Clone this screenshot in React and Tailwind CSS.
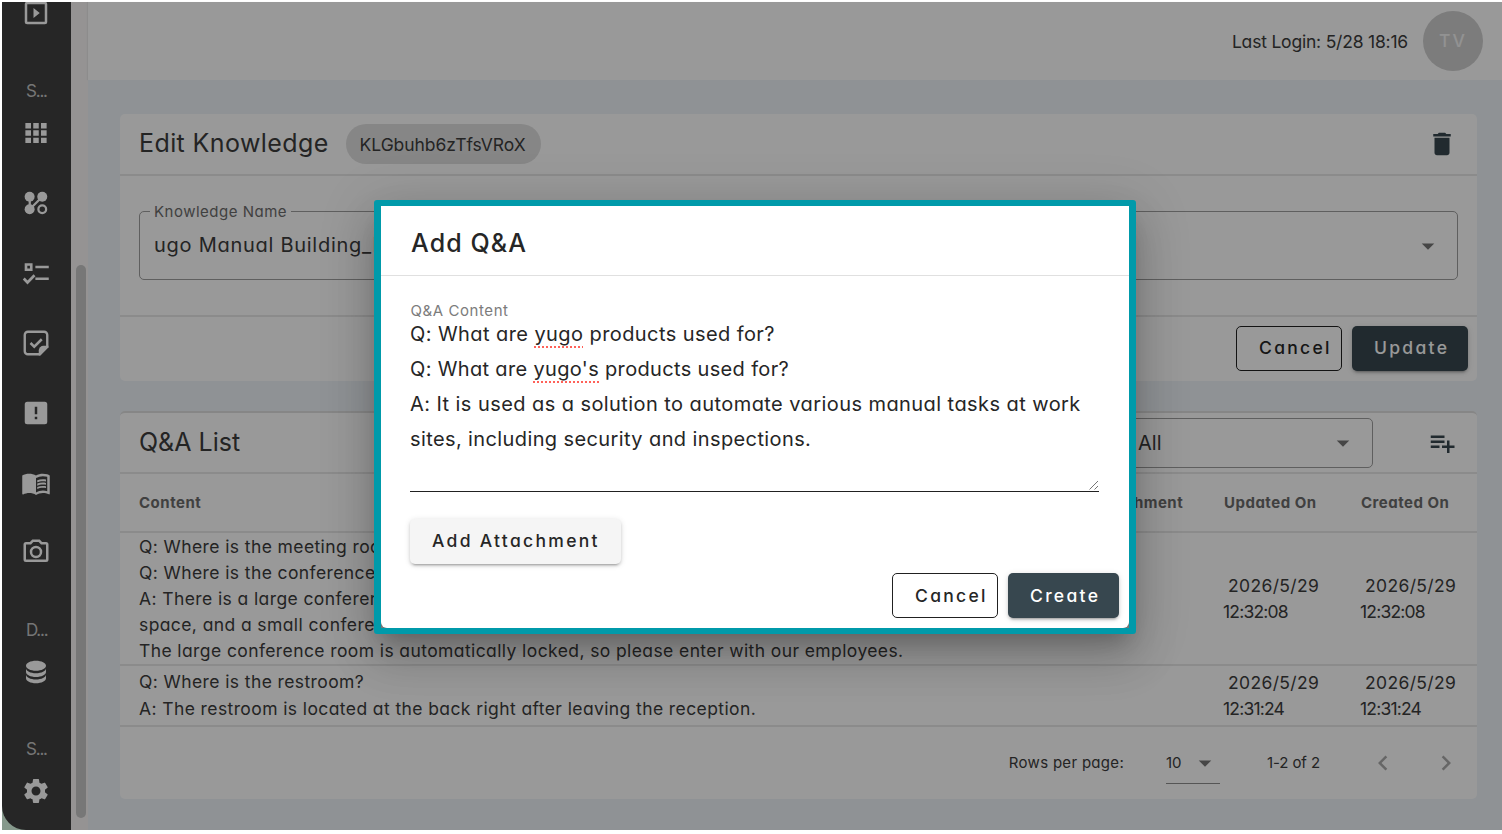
import {
  MdArrowDropDown,
  MdChevronLeft,
  MdChevronRight,
  MdDelete,
  MdMenuBook,
  MdPlaylistAdd,
  MdSettings,
} from 'react-icons/md'

function Svg({ children }) {
  return (
    <svg viewBox="0 0 24 24" className="h-[30px] w-[30px]" fill="currentColor">
      {children}
    </svg>
  )
}

const PlayBoxIcon = () => (
  <Svg>
    <path d="M19,19H5V5H19M19,3H5A2,2 0 0,0 3,5V19A2,2 0 0,0 5,21H19A2,2 0 0,0 21,19V5A2,2 0 0,0 19,3M10,8V16L15,12" />
  </Svg>
)

const AppsIcon = () => (
  <Svg>
    <path d="M16,20H20.500V15.700H16M16,14.200H20.500V9.800H16M9.800,8.300H14.200V4H9.800M16,8.300H20.500V4H16M9.800,14.200H14.200V9.800H9.800M3.500,14.200H8V9.800H3.500M3.500,20H8V15.700H3.500M9.800,20H14.200V15.700H9.800M3.500,8.300H8V4H3.500V8.300Z" />
  </Svg>
)

const FlowIcon = () => (
  <Svg>
    <circle cx="6.900" cy="7" r="4" />
    <circle cx="17" cy="7" r="4" />
    <circle cx="6.900" cy="17" r="4" />
    <circle cx="17" cy="17" r="3.1" fill="none" stroke="currentColor" strokeWidth="1.8" />
    <path d="M7 7V17L17 7" fill="none" stroke="currentColor" strokeWidth="1.8" />
  </Svg>
)

const ChecklistIcon = () => (
  <Svg>
    <path
      d="M4 5.200h4.200v4.200H4zM11.500 7.200h10.700M11.500 16.600h10.700M2.200 16.400l3 3.200 5.600-5.800"
      fill="none"
      stroke="currentColor"
      strokeWidth="2.1"
    />
  </Svg>
)

const StickerCheckIcon = () => (
  <Svg>
    <path
      d="M5.500 3h13A2.500 2.500 0 0 1 21 5.500V15l-6 6H5.500A2.500 2.500 0 0 1 3 18.500V5.500A2.500 2.500 0 0 1 5.500 3z"
      fill="none"
      stroke="currentColor"
      strokeWidth="1.9"
    />
    <path d="M21.900 14.200h-3.900A3.800 3.800 0 0 0 14.200 18v3.900h1.200l6.500-6.500z" />
    <path d="M7.600 12l3 3L16.600 9" fill="none" stroke="currentColor" strokeWidth="2" />
  </Svg>
)

const AlertBoxIcon = () => (
  <Svg>
    <path d="M5,3H19A2,2 0 0,1 21,5V19A2,2 0 0,1 19,21H5A2,2 0 0,1 3,19V5A2,2 0 0,1 5,3M13,13V7H11V13H13M13,17V15H11V17H13Z" />
  </Svg>
)

const CameraIcon = () => (
  <Svg>
    <path d="M20,4H16.83L15,2H9L7.17,4H4A2,2 0 0,0 2,6V18A2,2 0 0,0 4,20H20A2,2 0 0,0 22,18V6A2,2 0 0,0 20,4M20,18H4V6H8.05L9.88,4H14.12L15.95,6H20V18M12,7A5,5 0 0,0 7,12A5,5 0 0,0 12,17A5,5 0 0,0 17,12A5,5 0 0,0 12,7M12,15A3,3 0 0,1 9,12A3,3 0 0,1 12,9A3,3 0 0,1 15,12A3,3 0 0,1 12,15Z" />
  </Svg>
)

const DatabaseIcon = () => (
  <Svg>
    <path d="M12,3C7.58,3 4,4.79 4,7C4,9.21 7.58,11 12,11C16.42,11 20,9.21 20,7C20,4.79 16.42,3 12,3M4,9V12C4,14.21 7.58,16 12,16C16.42,16 20,14.21 20,12V9C20,11.21 16.42,13 12,13C7.58,13 4,11.21 4,9M4,14V17C4,19.21 7.58,21 12,21C16.42,21 20,19.21 20,17V14C20,16.21 16.42,18 12,18C7.58,18 4,16.21 4,14Z" />
  </Svg>
)

function NavItem({ children, className = '' }) {
  return (
    <div className={`flex h-[70px] shrink-0 items-center justify-center pr-px ${className}`}>{children}</div>
  )
}

function NavLabel({ children, className = '' }) {
  return (
    <div className={`h-5 shrink-0 pl-6 text-[17px] leading-5 tracking-[-1.2px] text-[#c4c4c4] ${className}`}>
      {children}
    </div>
  )
}

function Sidebar() {
  return (
    <aside className="w-[69px] shrink-0 bg-[#dfffea]">
      <nav className="flex h-full flex-col overflow-hidden rounded-bl-[24px] bg-[#404040] text-white">
        <NavItem className="-mt-6"><PlayBoxIcon /></NavItem>
        <NavLabel className="mt-[33px]">S...</NavLabel>
        <NavItem className="-mt-[3px]"><AppsIcon /></NavItem>
        <NavItem><FlowIcon /></NavItem>
        <NavItem><ChecklistIcon /></NavItem>
        <NavItem><StickerCheckIcon /></NavItem>
        <NavItem><AlertBoxIcon /></NavItem>
        <NavItem><MdMenuBook className="h-[30px] w-[30px]" /></NavItem>
        <NavItem className="pb-[2px]"><CameraIcon /></NavItem>
        <NavLabel className="mt-8">D...</NavLabel>
        <NavItem className="-mt-[3px]"><DatabaseIcon /></NavItem>
        <NavLabel className="mt-8">S...</NavLabel>
        <NavItem className="-mt-[3px]"><MdSettings className="h-[30px] w-[30px]" /></NavItem>
      </nav>
    </aside>
  )
}

function Button({ children, className = '' }) {
  return (
    <button
      className={`h-[45px] rounded-[5px] pt-px pl-[22px] text-left text-[17.5px] font-medium tracking-[2.3px] ${className}`}
    >
      {children}
    </button>
  )
}

const OUTLINED = 'w-[106px] border-[1.5px] border-[#212121] bg-transparent text-[#262626]'
const FILLED =
  'bg-[#37474f] text-white shadow-[0_4px_2px_-3px_rgba(0,0,0,0.2),0_2px_3px_rgba(0,0,0,0.14),0_1px_6px_rgba(0,0,0,0.12)]'

function EditCard() {
  return (
    <section className="h-[267px] rounded-[5px] bg-white">
      <div className="flex h-[62px] items-center border-b-2 border-[#e8e8e8] pr-5 pl-[19px]">
        <h1 className="pb-px text-[25px] tracking-[0.4px]">Edit Knowledge</h1>
        <span className="ml-[17px] flex h-10 w-[195px] items-center rounded-full bg-[#e0e0e0] pt-[2px] pl-[14px] text-[17.5px] tracking-[-0.07px]">
          KLGbuhb6zTfsVRoX
        </span>
        <MdDelete className="ml-auto h-[30px] w-[30px] text-[#37474f]" />
      </div>
      <div className="h-[139px] px-[19px] pt-[27px]">
        <fieldset className="h-[77px] rounded-[5px] border-[1.5px] border-[#9e9e9e] pl-[14px]">
          <legend className="-ml-[4px] h-[17px] px-[4px] text-[15px] leading-[17px] tracking-[0.5px] text-[#6c6c6c]">
            Knowledge Name
          </legend>
          <div className="flex h-[52px] items-center pr-[14px] text-[20px] tracking-[0.73px]">
            <span className="pb-[2px]">ugo Manual Building_B</span>
            <MdArrowDropDown className="ml-auto h-[30px] w-[30px] text-[#757575]" />
          </div>
        </fieldset>
      </div>
      <div className="flex h-[66px] items-center justify-end gap-[10px] border-t-2 border-[#e8e8e8] pr-[9px] pb-[2px]">
        <Button className={OUTLINED}>Cancel</Button>
        <Button className={`w-[116px] ${FILLED}`}>Update</Button>
      </div>
    </section>
  )
}

const rows = [
  {
    height: 'h-[133px] pt-px',
    lines: [
      'Q: Where is the meeting room?',
      'Q: Where is the conference room?',
      'A: There is a large conference room at the back of the shared',
      'space, and a small conference room next to it.',
      'The large conference room is automatically locked, so please enter with our employees.',
    ],
    date: '2026/5/29',
    time: '12:32:08',
  },
  {
    height: 'h-[61px]',
    lines: [
      'Q: Where is the restroom?',
      'A: The restroom is located at the back right after leaving the reception.',
    ],
    date: '2026/5/29',
    time: '12:31:24',
  },
]

function DateCell({ date, time }) {
  return (
    <div className="w-[137px] pl-5 leading-[26px]">
      <div className="pl-[5px] tracking-[0.35px]">{date}</div>
      <div className="tracking-[-0.8px]">{time}</div>
    </div>
  )
}

function ListCard() {
  return (
    <section className="mt-[30px] h-[388px] rounded-[5px] border-t-2 border-[#e0e0e0] bg-white">
      <div className="flex h-[61px] items-center border-b-2 border-[#e8e8e8] pr-5 pl-[19px]">
        <h2 className="pt-px text-[25px]">Q&amp;A List</h2>
        <div className="mr-[54px] ml-auto flex h-[50px] w-[250px] items-center rounded-[5px] border-[1.5px] border-[#9e9e9e] pr-[14px] pl-[14px] text-[20px]">
          <span className="pt-px">All</span>
          <MdArrowDropDown className="ml-auto h-[30px] w-[30px] text-[#757575]" />
        </div>
        <MdPlaylistAdd className="h-[30px] w-[30px] text-[#37474f]" />
      </div>
      <div className="flex h-[59px] items-center border-b-2 border-[#e8e8e8] pt-[2px] pl-5 text-[15px] font-bold tracking-[0.5px] text-[#6c6c6c]">
        <div className="-ml-px flex-1">Content</div>
        <div className="w-[136px] pl-[24px]">Attachment</div>
        <div className="w-[137px] pl-5">Updated On</div>
        <div className="-mr-px w-[137px] pl-5">Created On</div>
      </div>
      {rows.map(r => (
        <div
          key={r.time}
          className={`flex items-center border-b-2 border-[#e8e8e8] pl-[19px] text-[17.5px] leading-[26.2px] ${r.height}`}
        >
          <div className="flex-1 tracking-[0.4px] whitespace-nowrap">
            {r.lines.map(line => <div key={line}>{line}</div>)}
          </div>
          <DateCell date={r.date} time={r.time} />
          <DateCell date={r.date} time={r.time} />
        </div>
      ))}
      <div className="flex h-[72px] items-center justify-end pr-[19px] text-[15px]">
        <span className="pt-px tracking-[0.3px]">Rows per page:</span>
        <div className="ml-[42px] flex h-[42px] w-[54px] items-center border-b-[1.5px] border-[#8e8e8e]">
          <span className="pt-[2px]">10</span>
          <MdArrowDropDown className="ml-auto h-[30px] w-[30px] text-[#757575]" />
        </div>
        <span className="ml-[47px] pt-px tracking-[-0.1px]">1-2 of 2</span>
        <MdChevronLeft className="ml-[48px] h-[30px] w-[30px] text-[#ababab]" />
        <MdChevronRight className="-mr-[3px] ml-[33px] h-[30px] w-[30px] text-[#ababab]" />
      </div>
    </section>
  )
}

function Misspelled({ children }) {
  return (
    <span className="underline decoration-[#ff6259] decoration-dotted decoration-2 underline-offset-[5px] [text-decoration-skip-ink:none]">
      {children}
    </span>
  )
}

function Dialog() {
  return (
    <div className="absolute top-[200px] left-[374px] h-[434px] w-[762px] rounded-[3px] border-x-[7px] border-y-[6px] border-[#009aaa] bg-[#777] text-[#262626] shadow-[0_14px_19px_-9px_rgba(0,0,0,0.2),0_26px_44px_2px_rgba(0,0,0,0.14),0_8px_54px_6px_rgba(0,0,0,0.12)]">
      <div className="flex h-full flex-col rounded-b-[6px] bg-white">
        <div className="flex h-[70px] items-center border-b border-[#e0e0e0] pt-[6px] pl-[30px]">
          <h2 className="text-[25px] font-medium tracking-[1.1px]">Add Q&amp;A</h2>
        </div>
        <div className="pt-[25px] pr-[30px] pl-[29px]">
          <div className="h-[16px] pl-[0.5px] text-[15px] leading-5 tracking-[0.57px] text-[#7c7c7c]">Q&amp;A Content</div>
          <div className="flex h-[175px] border-b-[1.5px] border-[#212121] text-[20px] leading-[35px] whitespace-nowrap">
            <div>
              <div className="tracking-[0.42px]">Q: What are <Misspelled>yugo</Misspelled> products used for?</div>
              <div className="tracking-[0.34px]">Q: What are <Misspelled>yugo's</Misspelled> products used for?</div>
              <div className="tracking-[0.43px]">A: It is used as a solution to automate various manual tasks at work</div>
              <div className="tracking-[0.39px]">sites, including security and inspections.</div>
            </div>
            <svg viewBox="0 0 10 10" className="mb-[1px] ml-auto h-[10px] w-[10px] self-end" stroke="#757575">
              <path d="M0.500 9.500L9 1M5.500 9.500L9 6" />
            </svg>
          </div>
          <Button className="mt-[27px] block w-[211px] bg-[#f5f5f5] pb-px shadow-[0_4px_2px_-3px_rgba(0,0,0,0.2),0_2px_3px_rgba(0,0,0,0.14),0_1px_6px_rgba(0,0,0,0.12)]">
            Add Attachment
          </Button>
        </div>
        <div className="mt-auto flex justify-end gap-[10px] pr-[10px] pb-[10px]">
          <Button className={OUTLINED}>Cancel</Button>
          <Button className={`w-[111px] ${FILLED}`}>Create</Button>
        </div>
      </div>
    </div>
  )
}

export default function App() {
  return (
    <div className="relative h-[834px] w-[1502px] overflow-hidden bg-white pt-[2px] pb-1 pl-[2px] font-['Inter',sans-serif] text-[#3c3c3c] [font-feature-settings:'cv11']">
      <div className="relative flex h-[828px]">
        <Sidebar />
        <div className="flex w-[17px] shrink-0 flex-col bg-[#f8f6f6] pt-[263px] pl-[4.5px]">
          <div className="h-[553px] w-[10.5px] rounded-full bg-[#c6c6c6]" />
        </div>
        <div className="flex min-w-0 flex-1 flex-col">
          <header className="flex h-[78px] items-center justify-end bg-white pr-[19px] shadow-[-1px_0_1px_rgba(0,0,0,0.05)]">
            <span className="pt-[2px] text-[17.5px] tracking-[-0.2px]">Last Login: 5/28 18:16</span>
            <span className="ml-[15px] flex h-[60px] w-[60px] items-center justify-center rounded-full bg-[#cfcfcf] text-[17.5px] font-medium tracking-[2px] text-[#f4f4f4]">
              TV
            </span>
          </header>
          <main className="flex-1 bg-[#eef4f9] pt-[34px] pr-[25px] pl-8">
            <EditCard />
            <ListCard />
          </main>
        </div>
        <div className="absolute inset-0 bg-black/40" />
      </div>
      <Dialog />
    </div>
  )
}
